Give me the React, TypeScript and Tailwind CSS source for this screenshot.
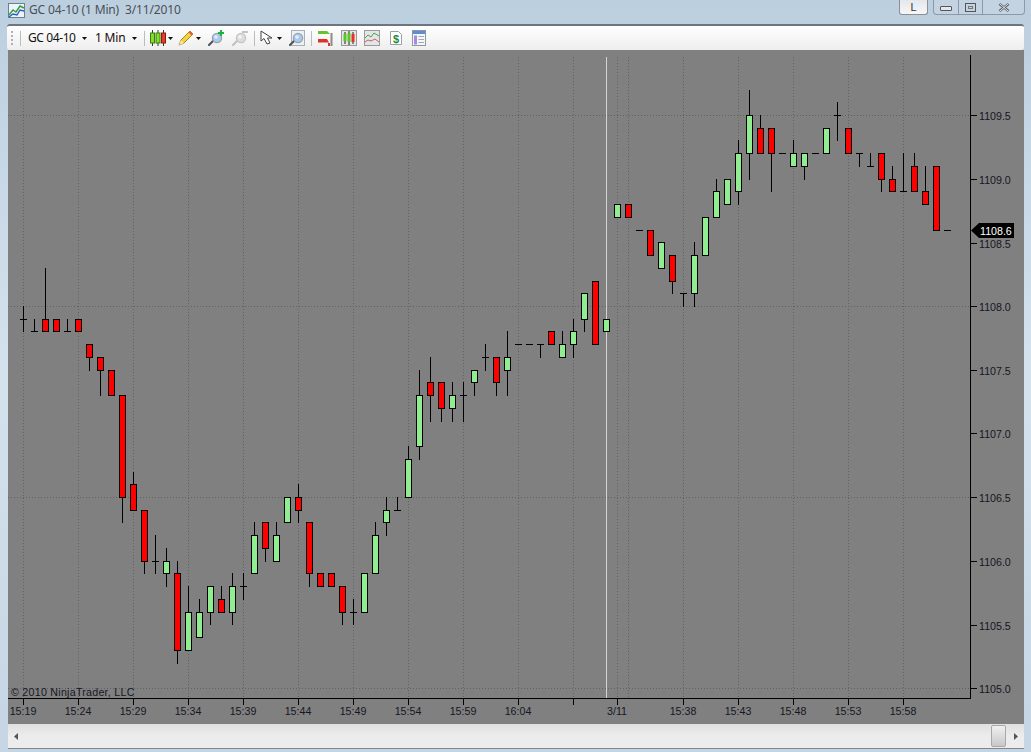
import React from 'react';

// [open, high, low, close] in ticks above 1105.0
const bars: [number, number, number, number][] = [
  [29, 30, 28, 29], [28, 29, 28, 28], [29, 33, 28, 28], [29, 29, 28, 28], [28, 29, 28, 28], [29, 29, 28, 28],
  [27, 27, 25, 26], [26, 26, 23, 25], [25, 25, 23, 23], [23, 23, 13, 15], [16, 17, 14, 14], [14, 14, 9, 10],
  [10, 12, 9, 10], [9, 11, 8, 10], [9, 10, 2, 3], [3, 8, 3, 6], [4, 7, 4, 6], [6, 8, 5, 8],
  [7, 8, 6, 6], [6, 9, 5, 8], [8, 9, 7, 8], [9, 13, 9, 12], [13, 13, 10, 11], [10, 13, 10, 12],
  [13, 15, 13, 15], [15, 16, 13, 14], [13, 13, 8, 9], [9, 9, 8, 8], [9, 9, 8, 8], [8, 8, 5, 6],
  [6, 7, 5, 6], [6, 9, 6, 9], [9, 13, 9, 12], [13, 15, 12, 14], [14, 15, 14, 14], [15, 19, 15, 18],
  [19, 25, 18, 23], [24, 26, 21, 23], [24, 24, 21, 22], [22, 24, 21, 23], [23, 24, 21, 23], [24, 25, 23, 25],
  [26, 27, 25, 26], [26, 26, 23, 24], [25, 28, 23, 26], [27, 27, 27, 27], [27, 27, 27, 27], [27, 27, 26, 27],
  [28, 28, 27, 27], [26, 28, 26, 27], [27, 29, 26, 28], [29, 31, 28, 31], [32, 32, 27, 27], [28, 29, 28, 29],
  [37, 38, 37, 38], [38, 38, 37, 37], [36, 36, 36, 36], [36, 36, 34, 34], [33, 35, 33, 35], [34, 34, 31, 32],
  [31, 31, 30, 31], [31, 35, 30, 34], [34, 37, 34, 37], [37, 40, 37, 39], [38, 40, 38, 40], [39, 43, 38, 42],
  [42, 47, 40, 45], [44, 45, 42, 42], [44, 44, 39, 42], [42, 42, 42, 42], [41, 43, 41, 42], [41, 42, 40, 42],
  [42, 42, 42, 42], [42, 44, 42, 44], [45, 46, 43, 45], [44, 44, 42, 42], [42, 42, 41, 42], [41, 42, 41, 41],
  [42, 42, 39, 40], [40, 41, 39, 39], [39, 42, 39, 39], [41, 42, 39, 39], [39, 41, 38, 38], [41, 41, 36, 36],
  [36, 36, 36, 36],
];

const py = (t: number) => Math.round(688 - t * 12.733);
const barX = (i: number) => 23 + 11 * i;

const gridX = [23, 78, 133, 188, 243, 298, 353, 408, 463, 518, 573, 617, 628, 683, 738, 793, 848, 903];
const gridY = [115, 306, 497, 688];
const timeLabels: [number, string][] = [
  [23, '15:19'], [78, '15:24'], [133, '15:29'], [188, '15:34'], [243, '15:39'], [298, '15:44'], [353, '15:49'],
  [408, '15:54'], [463, '15:59'], [518, '16:04'], [573, ''], [617, '3/11'], [683, '15:38'], [738, '15:43'],
  [793, '15:48'], [848, '15:53'], [903, '15:58'],
];
const priceLabels: [number, string][] = [
  [115, '1109.5'], [179, '1109.0'], [243, '1108.5'], [306, '1108.0'], [370, '1107.5'],
  [433, '1107.0'], [497, '1106.5'], [561, '1106.0'], [625, '1105.5'], [688, '1105.0'],
];

const Candle = ({ i }: { i: number }) => {
  const [o, h, l, c] = bars[i];
  const x = barX(i);
  const wick = h !== l && <line x1={x + 0.5} x2={x + 0.5} y1={py(h)} y2={py(l) + 1} stroke="#000" />;
  if (o === c) {
    return (
      <g>
        {wick}
        <line x1={x - 3} x2={x + 4} y1={py(o) + 0.5} y2={py(o) + 0.5} stroke="#000" />
      </g>
    );
  }
  const top = py(Math.max(o, c));
  const bottom = py(Math.min(o, c));
  return (
    <g>
      {wick}
      <rect x={x - 2.5} y={top + 0.5} width={6} height={bottom - top} fill={c > o ? '#90ee90' : '#ff0000'} stroke="#000" />
    </g>
  );
};

const Chart = () => (
  <svg viewBox="8 50 1016 674" className="block w-[1016px] h-[674px]" shapeRendering="crispEdges">
    {gridX.map((x) => (
      <line key={x} x1={x + 0.5} x2={x + 0.5} y1={57} y2={698} stroke="#616161" strokeDasharray="1 2" />
    ))}
    {gridY.map((y) => (
      <line key={y} x1={8} x2={970} y1={y + 0.5} y2={y + 0.5} stroke="#616161" strokeDasharray="1 2" />
    ))}
    <line x1={606.5} x2={606.5} y1={57} y2={698} stroke="#d4d4d4" />
    {bars.map((_, i) => (
      <Candle key={i} i={i} />
    ))}
    <line x1={970.5} x2={970.5} y1={55} y2={699} stroke="#000" />
    <line x1={8} x2={971} y1={698.5} y2={698.5} stroke="#000" />
    {priceLabels.map(([y, t]) => (
      <g key={t}>
        <line x1={971} x2={977} y1={y + 0.5} y2={y + 0.5} stroke="#000" />
        <text x={979} y={y + 5} className="font-['Liberation_Sans',sans-serif] text-[10.67px]" fill="#161622" shapeRendering="auto">
          {t}
        </text>
      </g>
    ))}
    {timeLabels.map(([x, t]) => (
      <g key={x}>
        <line x1={x + 0.5} x2={x + 0.5} y1={699} y2={705} stroke="#000" />
        <text x={x} y={715} textAnchor="middle" className="font-['Liberation_Sans',sans-serif] text-[10.67px]" fill="#161622" shapeRendering="auto">
          {t}
        </text>
      </g>
    ))}
    <text x={11} y={696} className="font-['Liberation_Sans',sans-serif] text-[10.67px] tracking-[0.26px]" fill="#161622" shapeRendering="auto">
      © 2010 NinjaTrader, LLC
    </text>
    <path d="M971 230.5 L979 223 H1014 V238 H979 Z" fill="#000" shapeRendering="auto" />
    <text x={980} y={235} className="font-['Liberation_Sans',sans-serif] text-[10.67px]" fill="#fff" shapeRendering="auto">
      1108.6
    </text>
  </svg>
);

const Caret = ({ className = '' }: { className?: string }) => (
  <svg viewBox="0 0 5 3" className={`w-[5px] h-[3px] ${className}`}>
    <path d="M0 0H5L2.5 3Z" fill="#111" />
  </svg>
);

const Sep = ({ className = '' }: { className?: string }) => <div className={`w-px h-[15px] bg-[#b9bdc2] ${className}`} />;

const Icon = ({ w = 16, className = '', children }: { w?: number; className?: string; children: React.ReactNode }) => (
  <svg viewBox={`0 0 ${w} 16`} className={`shrink-0 h-4 ${className}`} style={{ width: w }}>
    {children}
  </svg>
);

const Glass = ({ grey }: { grey?: boolean }) => (
  <>
    <path d="M1 15 L6 10" stroke={grey ? '#c0c0c0' : '#50545c'} strokeWidth="2.2" strokeLinecap="round" />
    <circle cx="9" cy="8" r="4.6" fill={grey ? '#dcdcdc' : '#a9c9ee'} stroke={grey ? '#c4c4c4' : '#9aa2ac'} strokeWidth="1.3" />
    <circle cx="8" cy="7" r="1.8" fill="#fff" opacity="0.7" />
  </>
);

const ChartIcon = () => (
  <svg viewBox="0 0 17 17" className="w-[17px] h-[17px] shrink-0">
    <rect x="0.5" y="1.5" width="16" height="14" fill="#eef3f8" stroke="#6d7f93" />
    <path d="M1 13 L5 8 L8 10 L12 4 L16 6" stroke="#2f9d3a" fill="none" strokeWidth="1.4" />
    <path d="M1 15 L5 12 L9 13 L12 8 L16 9" stroke="#2a5fc4" fill="none" strokeWidth="1.4" />
  </svg>
);

const Toolbar = () => (
  <div className="ml-[7px] mr-[7px] h-[26px] shrink-0 flex items-center rounded-[3px] border-t-2 border-t-[#6e757d] bg-gradient-to-b from-white to-[#eeeeee] text-[12px] text-[#111] font-['Noto_Sans',sans-serif]">
    <div className="ml-1 w-[2px] h-[14px] flex flex-col justify-between">
      {[0, 1, 2, 3].map((k) => (
        <div key={k} className="w-[2px] h-[2px] bg-[#b0b0b0]" />
      ))}
    </div>
    <Sep className="ml-[7px]" />
    <span className="ml-[7px] w-[47px] tracking-[-0.4px] whitespace-nowrap">GC 04-10</span>
    <Caret className="ml-[7px]" />
    <span className="ml-[8px] w-[32px] tracking-[-0.2px] whitespace-nowrap text-[#210a0a]">1 Min</span>
    <Caret className="ml-[5px]" />
    <Sep className="ml-[7px]" />
    {/* candles */}
    <Icon className="ml-[5px]">
      <path d="M2.5 0V16M8 0V16M13.5 0V16" stroke="#333" />
      <rect x="0.5" y="3" width="4" height="10" fill="#7fe02a" stroke="#3c7a10" />
      <rect x="6" y="3" width="4" height="10" fill="#7fe02a" stroke="#3c7a10" />
      <rect x="11.5" y="3" width="4" height="10" fill="#e83a2a" stroke="#8a1a10" />
    </Icon>
    <Caret className="ml-[2px]" />
    {/* pencil */}
    <Icon className="ml-[5px]">
      <path d="M1 15 L3 10 L12 1 L15 4 L6 13 Z" fill="#f3d33e" stroke="#a88a1a" strokeLinejoin="round" />
      <path d="M12 1 L15 4 L13.5 5.5 L10.5 2.5 Z" fill="#e0604a" />
      <path d="M1 15 L3 10 L6 13 Z" fill="#f7e4b8" />
    </Icon>
    <Caret className="ml-[2px]" />
    {/* zoom in */}
    <Icon className="ml-[7px]">
      <Glass />
      <path d="M13 0V6M10 3H16" stroke="#19b43c" strokeWidth="2" />
    </Icon>
    {/* zoom out */}
    <Icon className="ml-2">
      <Glass grey />
      <path d="M10 2H16" stroke="#c4c4c4" strokeWidth="2" />
    </Icon>
    <Sep className="ml-[6px]" />
    {/* cursor */}
    <Icon className="ml-[5px]" w={14}>
      <path d="M1 1 L1 11 L4 8.5 L7 14 L10 13 L7.5 8 L12 8 Z" fill="#fff" stroke="#444" strokeLinejoin="round" />
    </Icon>
    <Caret className="ml-[3px]" />
    {/* data box */}
    <Icon className="ml-[7px]">
      <rect x="2.5" y="0.5" width="13" height="15" fill="#eef1f4" stroke="#aab0b7" />
      <Glass />
    </Icon>
    <Sep className="ml-[6px]" />
    {/* order bars */}
    <Icon className="ml-[6px]">
      <path d="M0 1H9L12 4H0Z" fill="#65c42a" />
      <path d="M0 9H9L11 12.5H0Z" fill="#e0302a" />
      <path d="M13.5 3V16" stroke="#8a8a8a" strokeWidth="2" />
      <rect x="10" y="13" width="2" height="3" fill="#d03a2a" />
    </Icon>
    {/* candle chart style */}
    <Icon className="ml-[7px]">
      <rect x="0.5" y="0.5" width="15" height="15" fill="#e6e6e6" stroke="#9a9a9a" />
      <path d="M4 2V14M8 1V15M12 2V14" stroke="#222" />
      <rect x="2.5" y="4" width="3" height="7" fill="#58c826" />
      <rect x="6.5" y="3" width="3" height="9" fill="#58c826" />
      <rect x="10.5" y="4" width="3" height="8" fill="#e8302a" />
    </Icon>
    {/* indicators */}
    <Icon className="ml-[7px]">
      <rect x="0.5" y="0.5" width="15" height="15" fill="#e3e5e8" stroke="#9a9a9a" />
      <path d="M1 8 L4 5 L7 7 L10 3 L15 6" stroke="#4aa84a" fill="none" />
      <path d="M1 12 L4 10 L7 11 L11 9 L15 12" stroke="#d0605a" fill="none" />
    </Icon>
    {/* strategies */}
    <Icon className="ml-[9px]" w={14}>
      <path d="M1.5 1.5H9.5L12.5 4.5V14.5H1.5Z" fill="#fff" stroke="#9aa0a6" />
      <text x="7" y="12.5" textAnchor="middle" className="font-['Liberation_Sans',sans-serif] text-[11px] font-bold" fill="#1f8a3a">$</text>
    </Icon>
    {/* properties */}
    <Icon className="ml-[9px]" w={14}>
      <rect x="0.5" y="0.5" width="13" height="15" fill="#f4f6f8" stroke="#8c98a6" />
      <rect x="1" y="1" width="12" height="3" fill="#5b8fd0" />
      <rect x="2" y="5.5" width="3" height="9" fill="#a98ae0" />
      <path d="M6.5 6.5H12M6.5 9.5H12M6.5 12.5H12" stroke="#a0a8b0" />
    </Icon>
  </div>
);

const WindowButtons = () => (
  <div className="flex items-start gap-[5px] mr-[6px] mt-0 text-[#333]">
    <div className="w-[29px] h-[15px] flex items-center justify-center rounded-b-[3px] border border-t-0 border-[#8c9096] bg-gradient-to-b from-[#e4e8ec] to-[#f6f6f6] text-[11px] font-['Liberation_Sans',sans-serif] leading-none">
      L
    </div>
    <div className="w-[92px] h-[15px] flex rounded-b-[4px] border border-t-0 border-[#8c9aa8] bg-[#c3d3e1]">
      <div className="w-[25px] flex items-center justify-center border-r border-[#8c9aa8]">
        <div className="w-3 h-[5px] mt-[3px] border border-[#555] rounded-[1px] bg-[#e4e8ec]" />
      </div>
      <div className="w-[24px] flex items-center justify-center border-r border-[#8c9aa8]">
        <div className="w-[11px] h-[9px] border border-[#555] flex items-center justify-center">
          <div className="w-[5px] h-[3px] border border-[#777]" />
        </div>
      </div>
      <div className="flex-1 flex items-center justify-center">
        <svg viewBox="0 0 12 9" className="w-3 h-[9px]">
          <path d="M1.5 1 L10.5 8 M10.5 1 L1.5 8" stroke="#5a5f66" strokeWidth="2.4" />
          <path d="M2 1 L10 8 M10 1 L2 8" stroke="#e8ebee" strokeWidth="1" />
        </svg>
      </div>
    </div>
  </div>
);

const ScrollArrow = ({ right }: { right?: boolean }) => (
  <svg viewBox="0 0 4 7" className="w-1 h-[7px]">
    <path d={right ? 'M0 0L4 3.5L0 7Z' : 'M4 0L0 3.5L4 7Z'} fill="#555" />
  </svg>
);

export default function App() {
  return (
    <div className="w-[1031px] h-[752px] flex flex-col overflow-hidden bg-gradient-to-b from-[#bccfdf] via-[#d4e2ee] to-[#c5d5e3]">
      <div className="h-[24px] shrink-0 flex items-start justify-between">
        <div className="flex items-center gap-[4px] ml-[8px] mt-[1px] text-[12px] text-[#4a4f55] font-['Noto_Sans',sans-serif]">
          <ChartIcon />
          <span className="whitespace-pre tracking-[-0.15px]">GC 04-10 (1 Min)  3/11/2010</span>
        </div>
        <WindowButtons />
      </div>
      <Toolbar />
      <div className="ml-2 mr-[7px] h-[674px] shrink-0 bg-[#808080]">
        <Chart />
      </div>
      <div className="ml-2 mr-[7px] h-[25px] shrink-0 flex items-center justify-between bg-gradient-to-b from-[#e0e0e0] via-[#ececec] to-[#ececec] border-b border-[#7d8791]">
        <div className="ml-[6px]">
          <ScrollArrow />
        </div>
        <div className="flex items-center">
          <div className="w-[15px] h-[22px] rounded-[2px] border border-[#a8a8a8] bg-gradient-to-b from-[#f0f0f0] to-[#c8c8c8]" />
          <div className="ml-[8px] mr-[6px]">
            <ScrollArrow right />
          </div>
        </div>
      </div>
    </div>
  );
}
